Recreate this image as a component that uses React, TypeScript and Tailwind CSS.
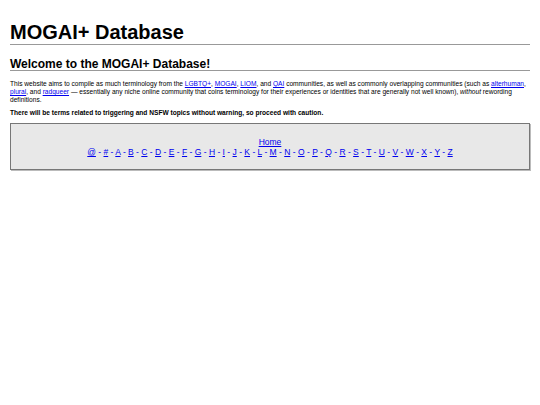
import React from "react";

const letters = ["@", "#", "A","B","C","D","E","F","G","H","I","J","K","L","M","N","O","P","Q","R","S","T","U","V","W","X","Y","Z"];

function L({ children }: { children: React.ReactNode }) {
  return <a href="#" className="text-[#0000ee] underline">{children}</a>;
}

export default function App() {
  return (
    <div className="min-h-[405px] bg-white px-[10px] pt-[21px] text-black" style={{ fontFamily: '"Liberation Sans", Arial, sans-serif' }}>
      <h1 className="border-b border-[#999] pb-[1px] text-[20px] font-bold leading-[22px]">MOGAI+ Database</h1>
      <h2 className="mt-[13px] border-b border-[#999] text-[12px] font-bold leading-[12px]">Welcome to the MOGAI+ Database!</h2>
      <p className="mt-[9px] text-[6.6px] leading-[8px]">
        This website aims to compile as much terminology from the <L>LGBTQ+</L>, <L>MOGAI</L>, <L>LIOM</L>, and <L>QAI</L> communities, as well as commonly overlapping communities (such as <L>alterhuman</L>, <L>plural</L>, and <L>radqueer</L> — essentially any niche online community that coins terminology for their experiences or identities that are generally not well known), <i>without</i> rewording definitions.
      </p>
      <p className="mt-[5px] text-[6.6px] font-bold leading-[8px]">There will be terms related to triggering and NSFW topics without warning, so proceed with caution.</p>
      <div className="mt-[6px] h-[47px] border border-[#777] bg-[#e8e8e8] pt-[13px] text-center text-[8.5px] leading-[10px] shadow-[1px_1px_0_#bbb]">
        <div><L>Home</L></div>
        <div>
          {letters.map((l, i) => (
            <React.Fragment key={l}>
              {i > 0 && <span className="text-[#0000ee]"> - </span>}
              <L>{l}</L>
            </React.Fragment>
          ))}
        </div>
      </div>
    </div>
  );
}
